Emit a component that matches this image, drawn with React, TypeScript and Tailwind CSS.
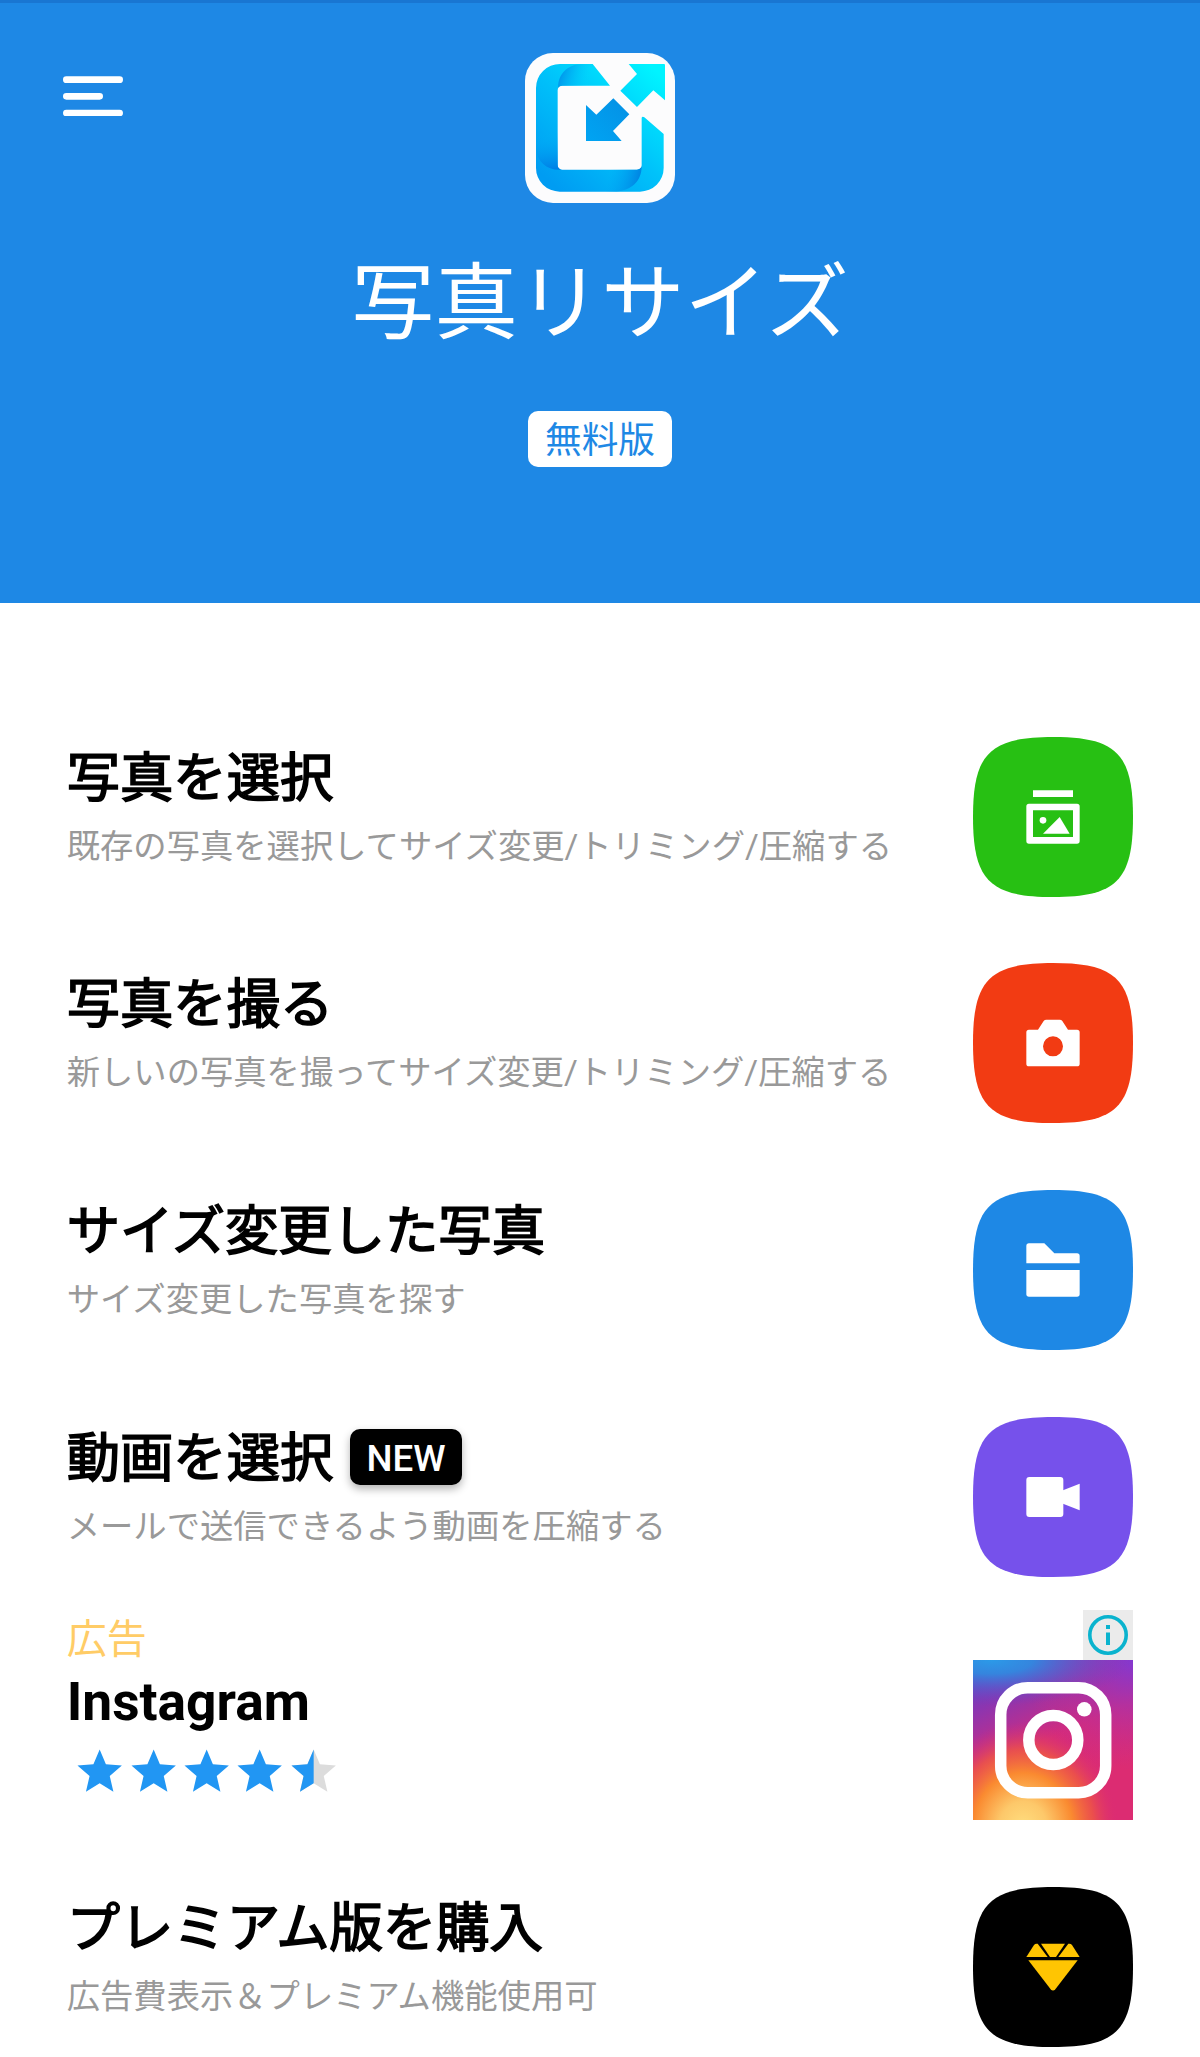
import type { ReactNode } from 'react';

interface MenuItem {
  title: string;
  description: string;
  color: string;
  icon: ReactNode;
  isNew?: boolean;
}

const items: MenuItem[] = [
  {
    title: '写真を選択',
    description: '既存の写真を選択してサイズ変更/トリミング/圧縮する',
    color: 'text-[#27c013]',
    icon: (
      <>
        <path d="M18 16h12v2H18z" />
        <path
          fillRule="evenodd"
          d="M16.8 20h14.4a.8.8 0 0 1 .8.8v10.4a.8.8 0 0 1-.8.8H16.8a.8.8 0 0 1-.8-.8V20.8a.8.8 0 0 1 .8-.8zM18 22v8h12v-8z"
        />
        <circle cx="21" cy="25" r="1" />
        <path d="M21 29l5-5 3 5z" />
      </>
    ),
  },
  {
    title: '写真を撮る',
    description: '新しいの写真を撮ってサイズ変更/トリミング/圧縮する',
    color: 'text-[#f23b13]',
    icon: (
      <path
        fillRule="evenodd"
        d="M16.8 20h2.7l1.7-2.6q.3-.4.8-.4h4q.5 0 .8.4l1.7 2.6h2.7a.8.8 0 0 1 .8.8v9.4a.8.8 0 0 1-.8.8H16.8a.8.8 0 0 1-.8-.8v-9.4a.8.8 0 0 1 .8-.8zM24 22a3 3 0 1 0 0 6a3 3 0 1 0 0-6z"
      />
    ),
  },
  {
    title: 'サイズ変更した写真',
    description: 'サイズ変更した写真を探す',
    color: 'text-[#1e88e5]',
    icon: (
      <>
        <path d="M16.8 16h4.6l3 3h6.8a.8.8 0 0 1 .8.8V22H16v-5.2a.8.8 0 0 1 .8-.8z" />
        <path d="M16 24h16v7.2a.8.8 0 0 1-.8.8H16.8a.8.8 0 0 1-.8-.8z" />
      </>
    ),
  },
  {
    title: '動画を選択',
    description: 'メールで送信できるよう動画を圧縮する',
    color: 'text-[#7651eb]',
    isNew: true,
    icon: (
      <>
        <rect x="16" y="18" width="11.1" height="12" rx="0.9" />
        <path d="M27 22l5-2v8l-5-2z" />
      </>
    ),
  },
];

const premium: MenuItem = {
  title: 'プレミアム版を購入',
  description: '広告費表示＆プレミアム機能使用可',
  color: 'text-black',
  icon: (
    <g fill="#ffc502">
      <path d="M16 21l2.3-3.6q.3-.4.8-.4h.3l3 4z" />
      <path d="M20.4 17h7.2l-2.7 4h-1.8z" />
      <path d="M32 21l-2.3-3.6q-.3-.4-.8-.4h-.3l-3 4z" />
      <path d="M16.6 22h14.8l-6.7 8.7q-.7.7-1.4 0z" />
    </g>
  ),
};

const STAR = 'M12 17.27L18.18 21l-1.64-7.03L22 9.24l-7.19-.61L12 2 9.19 8.63 2 9.24l5.46 4.73L5.82 21z';

function App() {
  return (
    <div
      lang="ja"
      className="flex h-[2057px] w-[1200px] flex-col overflow-hidden bg-white font-['Roboto','Noto_Sans_CJK_JP',sans-serif]"
    >
      <Header />
      <main className="flex flex-col pt-[100px]">
        {items.map((item) => (
          <MenuRow key={item.title} item={item} />
        ))}
        <AdRow />
        <MenuRow item={premium} />
      </main>
    </div>
  );
}

function Header() {
  return (
    <header className="h-[603.3px] shrink-0 border-t-[3px] border-[#1976d2] bg-[#1e88e5]">
      <div className="grid grid-cols-[1fr_150px_1fr] pt-[50px]">
        <button className="ml-[63px] mt-[23px] h-10 w-15" aria-label="Menu">
          <svg viewBox="0 0 18 12" className="h-10 w-15" stroke="#fff" strokeWidth="2" strokeLinecap="round">
            <path d="M1 1.1h16M1 6.1h10M1 11.1h16" />
          </svg>
        </button>
        <AppLogo />
      </div>
      <h1 className="mt-[45px] text-center text-[83.33px] leading-[112px] text-white">写真リサイズ</h1>
      <div className="mt-[51px] flex justify-center">
        <span className="h-14 rounded-[10px] bg-white px-[16.67px] text-[36.67px] leading-[60px] text-[#1e88e5]">
          無料版
        </span>
      </div>
    </header>
  );
}

function AppLogo() {
  return (
    <svg viewBox="0 0 450 450" className="size-[150px]">
      <defs>
        <linearGradient id="ring" gradientUnits="userSpaceOnUse" x1="90" y1="400" x2="400" y2="60">
          <stop offset="0" stopColor="#009cf2" />
          <stop offset="0.5" stopColor="#00c2fa" />
          <stop offset="1" stopColor="#00f4ff" />
        </linearGradient>
        <linearGradient id="foldTop" gradientUnits="userSpaceOnUse" x1="105" y1="55" x2="190" y2="85">
          <stop offset="0" stopColor="#0092ea" />
          <stop offset="1" stopColor="#00cdfb" stopOpacity="0" />
        </linearGradient>
        <linearGradient id="foldLeft" gradientUnits="userSpaceOnUse" x1="75" y1="350" x2="60" y2="240">
          <stop offset="0" stopColor="#007fe6" />
          <stop offset="1" stopColor="#00b4f8" stopOpacity="0" />
        </linearGradient>
        <linearGradient id="foldBottom" gradientUnits="userSpaceOnUse" x1="335" y1="395" x2="250" y2="375">
          <stop offset="0" stopColor="#0088e4" />
          <stop offset="1" stopColor="#00a0f3" stopOpacity="0" />
        </linearGradient>
        <linearGradient id="arrow" x1="0" y1="1" x2="1" y2="0">
          <stop offset="0" stopColor="#00a4f3" />
          <stop offset="1" stopColor="#0590e4" />
        </linearGradient>
      </defs>
      <rect width="450" height="450" rx="84" fill="#fcfcfd" />
      <path
        fill="url(#ring)"
        d="M105 33H203L255 98H112Q98 98 98 112V336Q98 350 112 350H336Q350 350 350 336V194Q352 189 358 193L416 243V345A71 71 0 0 1 345 416H104A71 71 0 0 1 33 345V105A72 72 0 0 1 105 33Z"
      />
      <path fill="url(#foldTop)" d="M99 104C100 62 128 36 165 34H203L255 98H112Q104 98 99 104Z" />
      <path fill="url(#foldLeft)" d="M34 220H98V336Q98 346 108 350C64 352 38 326 34 290Z" />
      <path fill="url(#foldBottom)" d="M200 350H336Q345 350 350 340C350 386 318 412 274 416H200Z" />
      <path fill="url(#ring)" d="M311 33H417Q420 33 420 36V142L385 112L336 162L286 113L336 63Z" />
      <path fill="url(#arrow)" d="M183 156L214 185L265 136L313 184L264 234L290 264H183Z" />
    </svg>
  );
}

function MenuRow({ item }: { item: MenuItem }) {
  return (
    <section className="flex h-[226.67px] shrink-0 justify-between px-[66.67px] py-[33.33px]">
      <div className="pt-[12px]">
        <div className="flex items-start gap-[16.67px]">
          <h2 className="text-[53.33px] leading-[60px] text-black [-webkit-text-stroke:1.67px_black]">
            {item.title}
          </h2>
          {item.isNew && (
            <span className="h-14 rounded-[10px] bg-black px-[16.67px] text-[36.67px] leading-[60px] font-medium text-white shadow-[0_4px_8px_rgba(0,0,0,0.3)]">
              NEW
            </span>
          )}
        </div>
        <p className="mt-[16px] text-[33.33px] leading-[44px] whitespace-nowrap text-[#999]">
          {item.description}
        </p>
      </div>
      <svg viewBox="0 0 48 48" className={`size-40 ${item.color}`}>
        <path fill="currentColor" d="M24 0C43 0 48 5 48 24S43 48 24 48S0 43 0 24S5 0 24 0Z" />
        <g fill="#fff">{item.icon}</g>
      </svg>
    </section>
  );
}

function AdRow() {
  return (
    <section className="flex h-[243.33px] shrink-0 justify-between px-[66.67px]">
      <div>
        <p className="pt-[7px] text-[40px] leading-[46px] text-[#ffcc66]">広告</p>
        <h2 className="mt-[8px] text-[53.33px] leading-[62px] font-bold text-black">Instagram</h2>
        <div className="mt-[12px] ml-[6.67px] flex">
          {[1, 1, 1, 1, 0.5].map((fill, i) => (
            <Star key={i} half={fill < 1} />
          ))}
        </div>
      </div>
      <div className="flex flex-col items-end">
        <div className="flex h-[50px] w-[50px] items-center justify-center bg-[#ebebeb]">
          <svg viewBox="0 0 40 40" className="size-10" fill="#0ab3ce">
            <circle cx="20" cy="20" r="18.2" fill="none" stroke="#0ab3ce" strokeWidth="3.6" />
            <path d="M18 10h4v4h-4zM18 17.6h4V30h-4z" />
          </svg>
        </div>
        <InstagramLogo />
      </div>
    </section>
  );
}

function Star({ half }: { half: boolean }) {
  return (
    <svg viewBox="0 0 24 24" className="size-[53.33px]">
      <path d={STAR} fill={half ? '#dcdcdc' : '#2196f3'} />
      {half && <path d="M12 2L9.19 8.63 2 9.24l5.46 4.73L5.82 21 12 17.27z" fill="#2196f3" />}
    </svg>
  );
}

function InstagramLogo() {
  return (
    <svg viewBox="0 0 160 160" className="size-40">
      <defs>
        <linearGradient id="igBase" x1="0" y1="0" x2="0.4" y2="0.9">
          <stop offset="0" stopColor="#5a46cc" />
          <stop offset="0.3" stopColor="#8c35b0" />
          <stop offset="0.65" stopColor="#d42b7c" />
          <stop offset="1" stopColor="#dc2c72" />
        </linearGradient>
        <radialGradient id="igPurple" gradientUnits="userSpaceOnUse" cx="160" cy="0" r="110">
          <stop offset="0" stopColor="#8438d0" />
          <stop offset="1" stopColor="#c42e92" stopOpacity="0" />
        </radialGradient>
        <radialGradient
          id="igBlue"
          gradientUnits="userSpaceOnUse"
          cx="0"
          cy="0"
          r="1"
          gradientTransform="translate(18 0) scale(140 46)"
        >
          <stop offset="0" stopColor="#2b9ae8" />
          <stop offset="0.3" stopColor="#3585de" />
          <stop offset="1" stopColor="#6a3fc4" stopOpacity="0" />
        </radialGradient>
        <radialGradient
          id="igWarm"
          gradientUnits="userSpaceOnUse"
          cx="0"
          cy="0"
          r="1"
          gradientTransform="translate(50 168) scale(96 106)"
        >
          <stop offset="0" stopColor="#ffdf80" />
          <stop offset="0.25" stopColor="#fdc86a" />
          <stop offset="0.52" stopColor="#fa8a30" />
          <stop offset="0.74" stopColor="#f05a40" stopOpacity="0.75" />
          <stop offset="1" stopColor="#d92a76" stopOpacity="0" />
        </radialGradient>
      </defs>
      <rect width="160" height="160" fill="url(#igBase)" />
      <rect width="160" height="160" fill="url(#igPurple)" />
      <rect width="160" height="160" fill="url(#igBlue)" />
      <rect width="160" height="160" fill="url(#igWarm)" />
      <g fill="none" stroke="#fff" strokeWidth="11.5">
        <rect x="27.7" y="27.7" width="105" height="105" rx="27" />
        <circle cx="80.3" cy="80" r="24.5" />
      </g>
      <circle cx="111.3" cy="49.3" r="7.3" fill="#fff" />
    </svg>
  );
}

export default App;
